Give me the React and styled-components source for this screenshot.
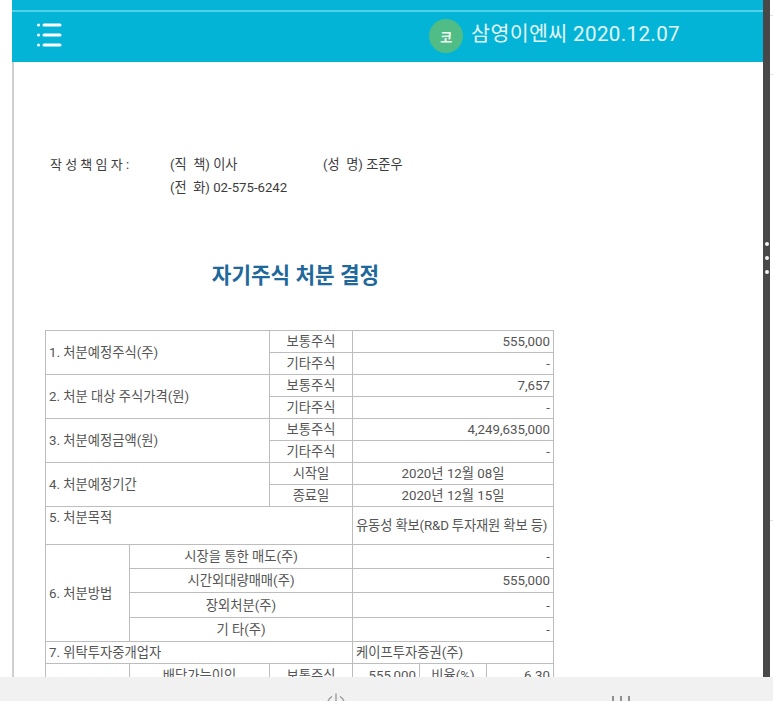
import React from 'react';
import styled, { createGlobalStyle } from 'styled-components';

const GlobalStyle = createGlobalStyle`
  html, body {
    margin: 0;
    padding: 0;
    background: #fff;
  }
  body {
    font-family: Roboto, "Noto Sans CJK KR", sans-serif;
  }
`;

const rows = [
  { label: '1. 처분예정주식(주)', labelRows: 2, kind: '보통주식', value: '555,000' },
  { kind: '기타주식', value: '-' },
  { label: '2. 처분 대상 주식가격(원)', labelRows: 2, kind: '보통주식', value: '7,657' },
  { kind: '기타주식', value: '-' },
  { label: '3. 처분예정금액(원)', labelRows: 2, kind: '보통주식', value: '4,249,635,000' },
  { kind: '기타주식', value: '-' },
  { label: '4. 처분예정기간', labelRows: 2, kind: '시작일', value: '2020년 12월 08일', center: true },
  { kind: '종료일', value: '2020년 12월 15일', center: true },
];

const methods = [
  { name: '시장을 통한 매도(주)', value: '-', height: 24 },
  { name: '시간외대량매매(주)', value: '555,000', height: 24 },
  { name: '장외처분(주)', value: '-', height: 25 },
  { name: '기 타(주)', value: '-', height: 24 },
];

const MenuIcon = () => (
  <svg width="26" height="26" viewBox="0 0 26 26" fill="none">
    <circle cx="2.5" cy="3" r="1.5" fill="#fff" />
    <circle cx="2.5" cy="13" r="1.5" fill="#fff" />
    <circle cx="2.5" cy="23" r="1.5" fill="#fff" />
    <path d="M8 3h16M8 13h16M8 23h16" stroke="#fff" strokeWidth="3" strokeLinecap="round" />
  </svg>
);

const PowerIcon = () => (
  <svg width="22" height="22" viewBox="0 0 22 22" fill="none" stroke="#8e8e8e" strokeWidth="1.2">
    <path d="M7 3.5a8.5 8.5 0 1 0 8 0" />
    <path d="M11 0.5v8" />
  </svg>
);

const RecentsIcon = () => (
  <svg width="20" height="14" viewBox="0 0 20 14" fill="none" stroke="#777" strokeWidth="1.6">
    <path d="M2 0v14M10 0v14M18 0v14" />
  </svg>
);

const App = () => {
  return (
    <Screen>
      <GlobalStyle />
      <Shell>
        <LeftGutter />
        <Sheet>
          <Header>
            <MenuButton>
              <MenuIcon />
            </MenuButton>
            <Avatar>코</Avatar>
            <HeaderTitle>삼영이엔씨 2020.12.07</HeaderTitle>
          </Header>
          <Body>
            <Signer>
              <SignerLabel>작 성 책 임 자 :</SignerLabel>
              <SignerField>(직&nbsp; 책) 이사</SignerField>
              <SignerField>(성&nbsp; 명) 조준우</SignerField>
              <SignerBlank />
              <SignerField>(전&nbsp; 화) 02-575-6242</SignerField>
            </Signer>
            <Title>자기주식 처분 결정</Title>
            <Report>
              <colgroup>
                <col width="84" />
                <col width="140" />
                <col width="83" />
                <col width="67" />
                <col width="67" />
                <col width="67" />
              </colgroup>
              <tbody>
                {rows.map((row) => (
                  <Row key={row.label + row.kind + row.value} $height={22}>
                    {row.label && (
                      <Cell colSpan={2} rowSpan={row.labelRows}>
                        {row.label}
                      </Cell>
                    )}
                    <Cell $align="center">{row.kind}</Cell>
                    <Cell colSpan={3} $align={row.center ? 'center' : 'right'}>
                      {row.value}
                    </Cell>
                  </Row>
                ))}
                <Row $height={38}>
                  <Cell colSpan={3} $valign="top" $top={2}>
                    5. 처분목적
                  </Cell>
                  <Cell colSpan={3} $tight>
                    유동성 확보(R&amp;D 투자재원 확보 등)
                  </Cell>
                </Row>
                {methods.map((method, i) => (
                  <Row key={method.name} $height={method.height}>
                    {i === 0 && <Cell rowSpan={4}>6. 처분방법</Cell>}
                    <Cell colSpan={2} $align="center">
                      {method.name}
                    </Cell>
                    <Cell colSpan={3} $align="right">
                      {method.value}
                    </Cell>
                  </Row>
                ))}
                <Row $height={22}>
                  <Cell colSpan={3}>7. 위탁투자중개업자</Cell>
                  <Cell colSpan={3}>케이프투자증권(주)</Cell>
                </Row>
                <Row $height={24}>
                  <Cell />
                  <Cell $align="center">배당가능이익</Cell>
                  <Cell $align="center">보통주식</Cell>
                  <Cell $align="right">555,000</Cell>
                  <Cell $align="center">비율(%)</Cell>
                  <Cell $align="right">6.30</Cell>
                </Row>
              </tbody>
            </Report>
          </Body>
        </Sheet>
        <EdgeBar>
          <EdgeHandle>
            <EdgeDot />
            <EdgeDot />
            <EdgeDot />
          </EdgeHandle>
        </EdgeBar>
        <RightGutter>
          <GutterTick $top={15} />
          <GutterTick $top={74} />
          <GutterTick $top={520} />
        </RightGutter>
      </Shell>
      <NavBar>
        <NavSlot $width={347} $top={16}>
          <PowerIcon />
        </NavSlot>
        <NavSlot $width={284} $top={19}>
          <RecentsIcon />
        </NavSlot>
      </NavBar>
    </Screen>
  );
};

const Screen = styled.div`
  width: 773px;
  height: 701px;
  display: flex;
  flex-direction: column;
  overflow: hidden;
  background: #fff;
`;

const Shell = styled.div`
  flex: 1;
  min-height: 0;
  display: flex;
`;

const LeftGutter = styled.div`
  width: 12px;
  flex: none;
`;

const Sheet = styled.div`
  width: 751px;
  flex: none;
  display: flex;
  flex-direction: column;
  overflow: hidden;
`;

const Header = styled.header`
  height: 62px;
  flex: none;
  box-sizing: border-box;
  display: flex;
  align-items: center;
  padding: 20px 0 0 24px;
  background: linear-gradient(#05b4d6 0 10px, #4fd2e8 10px 12px, #04b4d6 12px);
`;

const MenuButton = styled.div`
  display: flex;
  margin-top: -12px;
  margin-right: auto;
`;

const Avatar = styled.div`
  width: 34px;
  height: 34px;
  margin-top: -10px;
  border-radius: 50%;
  display: flex;
  align-items: center;
  justify-content: center;
  background: #4fbd85;
  color: #f2fbf6;
  font-size: 13px;
  font-weight: 700;
`;

const HeaderTitle = styled.div`
  margin: -18px 83px 0 8px;
  color: #e2f7fb;
  font-size: 20.6px;
  letter-spacing: 0.35px;
  white-space: nowrap;
`;

const Body = styled.main`
  flex: 1;
  min-height: 0;
  overflow: hidden;
  border-left: 2px solid #cfcfcf;
  padding: 94px 0 0 31px;
`;

const Signer = styled.div`
  display: grid;
  grid-template-columns: 120px 153px auto;
  justify-content: start;
  row-gap: 6px;
  padding-left: 5px;
  color: #3c3c3c;
  font-size: 13.2px;
  line-height: 17px;
`;

const SignerLabel = styled.div`
  font-size: 13px;
  white-space: nowrap;
`;

const SignerField = styled.div`
  white-space: nowrap;
`;

const SignerBlank = styled.div``;

const Title = styled.h1`
  width: 501px;
  margin: 65px 0 39px;
  text-align: center;
  color: #1f689c;
  font-size: 21.3px;
  line-height: 30px;
  font-weight: 700;
`;

const Report = styled.table`
  width: 509px;
  table-layout: fixed;
  border-collapse: collapse;
  border: 1px solid #8f8f8f;
  color: #555;
  font-size: 13.3px;
`;

const Row = styled.tr`
  height: ${(props) => props.$height}px;
`;

const Cell = styled.td`
  box-sizing: border-box;
  border: 1px solid #bdbdbd;
  padding: ${(props) => props.$top || 0}px 3px 0;
  line-height: 17px;
  white-space: nowrap;
  letter-spacing: ${(props) => (props.$tight ? '-0.15px' : 'normal')};
  text-align: ${(props) => props.$align || 'left'};
  vertical-align: ${(props) => props.$valign || 'middle'};
`;

const EdgeBar = styled.div`
  width: 7px;
  flex: none;
  margin-bottom: -1px;
  background: #484848;
`;

const EdgeHandle = styled.div`
  display: flex;
  flex-direction: column;
  align-items: center;
  gap: 10px;
  padding-top: 242px;
`;

const EdgeDot = styled.div`
  width: 4px;
  height: 4px;
  border-radius: 50%;
  background: #f4f4f4;
`;

const RightGutter = styled.div`
  position: relative;
  width: 3px;
  flex: none;
`;

const GutterTick = styled.div`
  position: absolute;
  top: ${(props) => props.$top}px;
  left: 0;
  right: 0;
  height: 1px;
  background: #e2e2e2;
`;

const NavBar = styled.nav`
  height: 24px;
  flex: none;
  display: flex;
  align-items: flex-start;
  overflow: hidden;
  background: #f1f1f1;
`;

const NavSlot = styled.div`
  width: ${(props) => props.$width}px;
  margin-top: ${(props) => props.$top}px;
  display: flex;
  justify-content: flex-end;
`;

export default App;
